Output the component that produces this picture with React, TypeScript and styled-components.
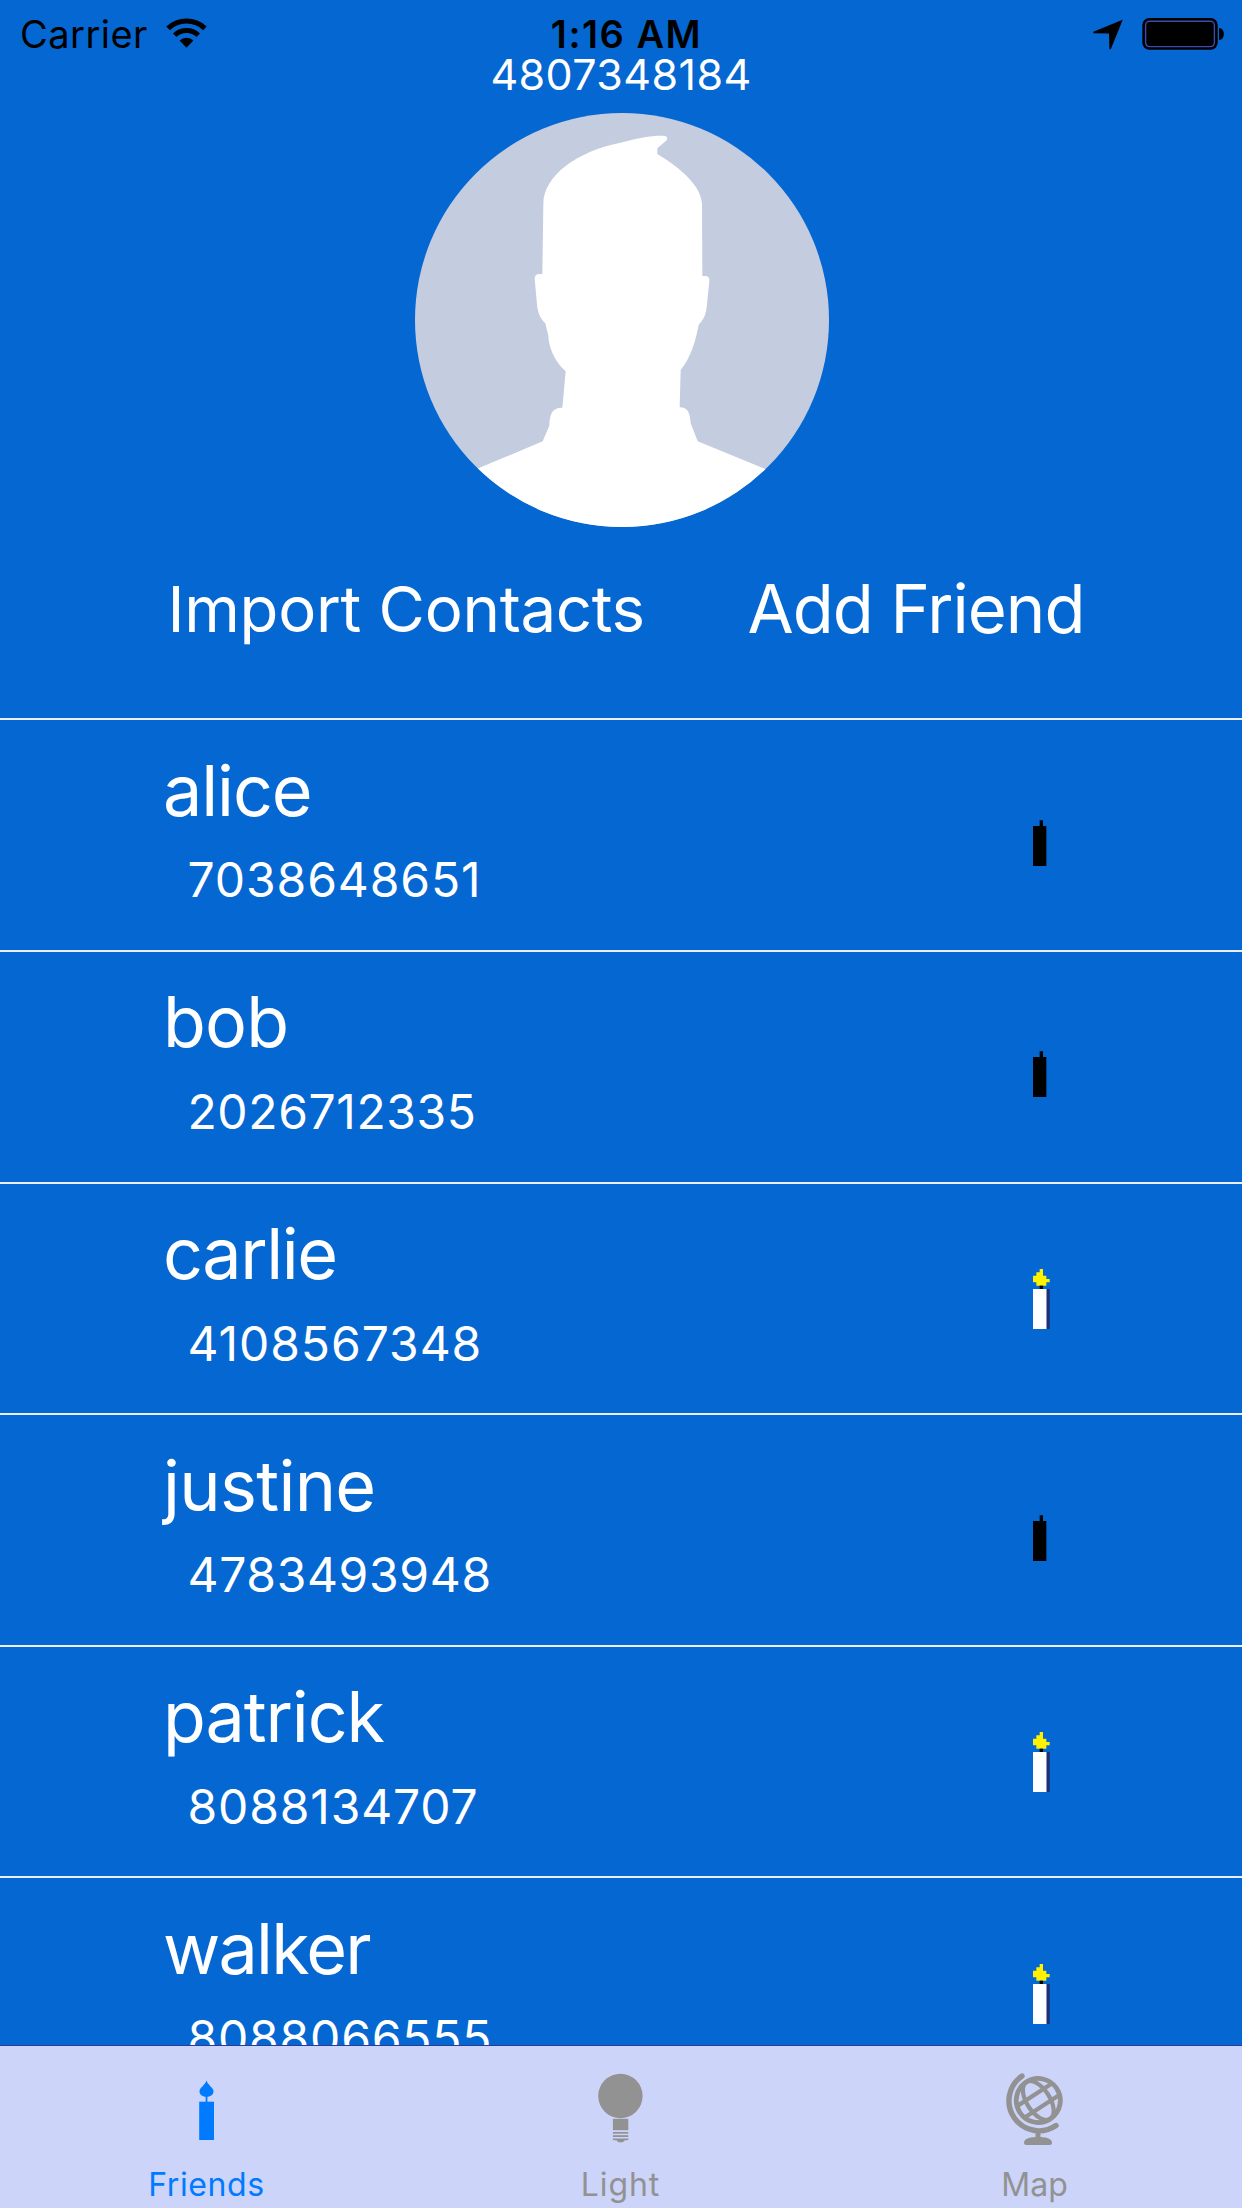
import React from 'react';
import styled, { createGlobalStyle } from 'styled-components';

const BLUE = '#0567d1';
const TINT = '#007aff';
const MUTED = '#929292';

const GlobalStyle = createGlobalStyle`
  *, *::before, *::after { box-sizing: border-box; }
  body { margin: 0; background: ${BLUE}; }
  button { border: 0; margin: 0; padding: 0; background: none; color: inherit; font: inherit; }
`;

const Screen = styled.div`
  display: flex;
  flex-direction: column;
  width: 1242px;
  height: 2208px;
  overflow: hidden;
  background: ${BLUE};
  color: #fff;
  font-family: Inter, Roboto, "Liberation Sans", sans-serif;
  white-space: nowrap;
`;

const StatusBar = styled.header`
  display: grid;
  grid-template-columns: 1fr auto 1fr;
  height: 51px;
  padding: 18px 18px 0 20px;
  color: #000;
`;

const StatusText = styled.span<{ $bold?: boolean; $tracking: number }>`
  font-size: 38px;
  line-height: 32px;
  font-weight: ${(p) => (p.$bold ? 600 : 400)};
  letter-spacing: ${(p) => p.$tracking}px;
  padding-left: ${(p) => (p.$bold ? 9 : 0)}px;
`;

const StatusGroup = styled.div<{ $end?: boolean }>`
  display: flex;
  align-items: flex-start;
  justify-content: ${(p) => (p.$end ? 'flex-end' : 'flex-start')};
  gap: ${(p) => (p.$end ? 19 : 18)}px;
`;

const Icon = styled.svg`
  display: block;
  flex: none;
  overflow: visible;
`;

const Profile = styled.section`
  display: flex;
  flex-direction: column;
  align-items: center;
  flex: none;
  height: 667.4px;
`;

const OwnNumber = styled.div`
  font-size: 43px;
  line-height: 46px;
  letter-spacing: 0.41px;
`;

const Avatar = styled.div`
  width: 414px;
  height: 414px;
  margin: 15.5px 0 42.5px 2px;
  border-radius: 50%;
  overflow: hidden;
  background: #c4cce0;
`;

const Actions = styled.div`
  display: flex;
  align-self: stretch;
  justify-content: space-between;
  padding: 0 157.5px 0 167.5px;
`;

const Action = styled.button<{ $size: number; $tracking: number }>`
  font-size: ${(p) => p.$size}px;
  line-height: 80px;
  letter-spacing: ${(p) => p.$tracking}px;
`;

const List = styled.ul`
  flex: 1;
  min-height: 0;
  margin: 0;
  padding: 0;
  list-style: none;
  overflow: hidden;
`;

const Row = styled.li`
  display: flex;
  justify-content: space-between;
  height: 231.6px;
  padding: 30.500px 192px 0 163px;
  border-top: 2px solid #eceefb;
`;

const Name = styled.div<{ $tracking: number }>`
  font-size: 70px;
  line-height: 80px;
  letter-spacing: ${(p) => p.$tracking}px;
`;

const Phone = styled.div<{ $tracking: number }>`
  margin: 21.5px 0 0 24.500px;
  font-size: 48px;
  line-height: 56px;
  letter-spacing: ${(p) => p.$tracking}px;
`;

const CandleSlot = styled.div`
  padding-top: 55px;
`;

const TabBar = styled.nav`
  display: grid;
  grid-template-columns: repeat(3, 1fr);
  flex: none;
  height: 163px;
  border-top: 1px solid #2c3a94;
  background: #ccd4f9;
`;

const Tab = styled.button<{ $active?: boolean }>`
  display: flex;
  flex-direction: column;
  align-items: center;
  padding: 24px 1px 0 0;
  color: ${(p) => (p.$active ? TINT : MUTED)};
`;

const TabLabel = styled.span<{ $tracking: number }>`
  margin-top: 21px;
  font-size: 32px;
  line-height: 40px;
  letter-spacing: ${(p) => p.$tracking}px;
`;

function WifiIcon() {
  return (
    <Icon width="41" height="30" viewBox="0 0 41 30">
      <path d="M2.1 10.3A26.8 26.8 0 0 1 38.9 10.3" fill="none" stroke="currentColor" strokeWidth="5.2" />
      <path d="M8.7 17.3A17.2 17.2 0 0 1 32.3 17.3" fill="none" stroke="currentColor" strokeWidth="5" />
      <path d="M20.5 29.7L13.6 22.4A10 10 0 0 1 27.4 22.4Z" fill="currentColor" />
    </Icon>
  );
}

function LocationIcon() {
  return (
    <Icon width="30" height="32" viewBox="0 0 30 32">
      <path d="M29.7 1.8L0.4 13.8V15.2L16 15.4L16.4 31.2H17.8Z" fill="currentColor" />
    </Icon>
  );
}

function BatteryIcon() {
  return (
    <Icon width="82" height="32" viewBox="0 0 82 32">
      <rect x="0.3" y="0" width="75.4" height="31.8" rx="7" fill="#000" />
      <rect x="3.6" y="3.2" width="68.8" height="25.4" rx="4" fill="none" stroke="#3c4bb2" strokeWidth="1.4" />
      <path d="M77 10C83.4 10 83.4 22 77 22Z" fill="#000" />
    </Icon>
  );
}

function Silhouette() {
  return (
    <Icon width="414" height="414" viewBox="47 37 1242 1242">
      <path
        fill="#fff"
        d="M237 1103L430 1022L450 975C451 938 460 920 489 921L499 812C466 782 448 740 447 705L438 668C420 650 414 632 412 600L406 535Q406 520 420 520L429 521L432 310C432 225 535 152 660 127C710 113 750 105 792 105Q808 106 802 119L774 143V160C860 212 908 265 908 312L909 526H920Q931 527 930 542L922 620C920 640 913 658 898 672C888 725 874 770 844 808L841 920C865 921 872 935 874 968L895 1022L1098 1105L1289 1290H47Z"
      />
    </Icon>
  );
}

function Candle({ lit }: { lit: boolean }) {
  return (
    <Icon width="16.7" height="60" viewBox="0 0 5 18">
      {lit ? (
        <>
          <path d="M2 0H3V2H4V3H5V4H4V5H1V4H0V2H1V1H2Z" fill="#fff200" />
          <rect x="2" y="5" width="1" height="1" fill="#000" />
          <rect x="0" y="6" width="4.1" height="12" fill="#fff" />
          <rect x="4.1" y="6" width="0.9" height="12" fill="#272c6c" />
        </>
      ) : (
        <path d="M2 4.3H3V6H4V18H0V6H2Z" fill="#000" />
      )}
    </Icon>
  );
}

function CandleTabIcon() {
  return (
    <Icon width="60" height="74" viewBox="0 0 60 74">
      <path d="M29.5 10.5C31 15.500 36.5 17.5 36.5 21.5C36.5 25 33 26.8 29.5 26.8C26 26.8 22.5 25 22.5 21.5C22.5 17.5 28 15.5 29.5 10.5Z" fill="currentColor" />
      <rect x="28.6" y="26" width="1.8" height="6" fill="currentColor" />
      <rect x="22.2" y="31.7" width="14.8" height="38.3" fill="currentColor" />
    </Icon>
  );
}

function BulbTabIcon() {
  return (
    <Icon width="60" height="74" viewBox="0 0 60 74">
      <g fill="currentColor">
        <circle cx="29.4" cy="26" r="22.2" />
        <rect x="21.9" y="48.8" width="15.4" height="11.4" />
        <rect x="21.9" y="62" width="15.4" height="1.7" />
        <rect x="21.9" y="65.2" width="15.4" height="1.8" />
        <path d="M21.9 68.4H37.3V70L33.4 70.6L31.9 72.2H27.4L25.8 70.6L21.9 70Z" />
      </g>
    </Icon>
  );
}

function GlobeTabIcon() {
  return (
    <Icon width="60" height="74" viewBox="0 0 60 74">
      <g fill="none" stroke="currentColor">
        <g transform="translate(33.3 30.5) rotate(-33)">
          <circle r="22" strokeWidth="4.8" />
          <ellipse rx="11.5" ry="22" strokeWidth="4.2" />
          <path d="M-21.5 -6.8H21.5M-21.5 6.8H21.5" strokeWidth="4.2" />
        </g>
        <path d="M17 6A29.7 29.7 0 1 0 51 55.5" strokeWidth="5.4" strokeLinecap="round" />
        <path d="M33 60V69" strokeWidth="5" />
      </g>
      <path d="M21.5 75Q19 75 19 72.5C19 68 27 67 33 67C39 67 47 68 47 72.5Q47 75 44.5 75Z" fill="currentColor" />
    </Icon>
  );
}

type Friend = { name: string; phone: string; lit: boolean; nameTracking: number; phoneTracking: number };

const friends: Friend[] = [
  { name: 'alice', phone: '7038648651', lit: false, nameTracking: -1.1, phoneTracking: 0.9 },
  { name: 'bob', phone: '2026712335', lit: false, nameTracking: -0.8, phoneTracking: 0.6 },
  { name: 'carlie', phone: '4108567348', lit: true, nameTracking: -1.4, phoneTracking: 0.95 },
  { name: 'justine', phone: '4783493948', lit: false, nameTracking: -0.7, phoneTracking: 0.65 },
  { name: 'patrick', phone: '8088134707', lit: true, nameTracking: -1.1, phoneTracking: 0.85 },
  { name: 'walker', phone: '8088066555', lit: true, nameTracking: -1.8, phoneTracking: 0.8 },
];

export default function App() {
  return (
    <Screen>
      <GlobalStyle />
      <StatusBar>
        <StatusGroup>
          <StatusText $tracking={0.46}>Carrier</StatusText>
          <WifiIcon />
        </StatusGroup>
        <StatusText $bold $tracking={1.5}>1:16 AM</StatusText>
        <StatusGroup $end>
          <LocationIcon />
          <BatteryIcon />
        </StatusGroup>
      </StatusBar>
      <Profile>
        <OwnNumber>4807348184</OwnNumber>
        <Avatar>
          <Silhouette />
        </Avatar>
        <Actions>
          <Action $size={63.5} $tracking={-0.3}>Import Contacts</Action>
          <Action $size={67} $tracking={-0.98}>Add Friend</Action>
        </Actions>
      </Profile>
      <List>
        {friends.map((f) => (
          <Row key={f.name}>
            <div>
              <Name $tracking={f.nameTracking}>{f.name}</Name>
              <Phone $tracking={f.phoneTracking}>{f.phone}</Phone>
            </div>
            <CandleSlot>
              <Candle lit={f.lit} />
            </CandleSlot>
          </Row>
        ))}
      </List>
      <TabBar>
        <Tab $active>
          <CandleTabIcon />
          <TabLabel $tracking={0.6}>Friends</TabLabel>
        </Tab>
        <Tab>
          <BulbTabIcon />
          <TabLabel $tracking={0.9}>Light</TabLabel>
        </Tab>
        <Tab>
          <GlobeTabIcon />
          <TabLabel $tracking={0.06}>Map</TabLabel>
        </Tab>
      </TabBar>
    </Screen>
  );
}
